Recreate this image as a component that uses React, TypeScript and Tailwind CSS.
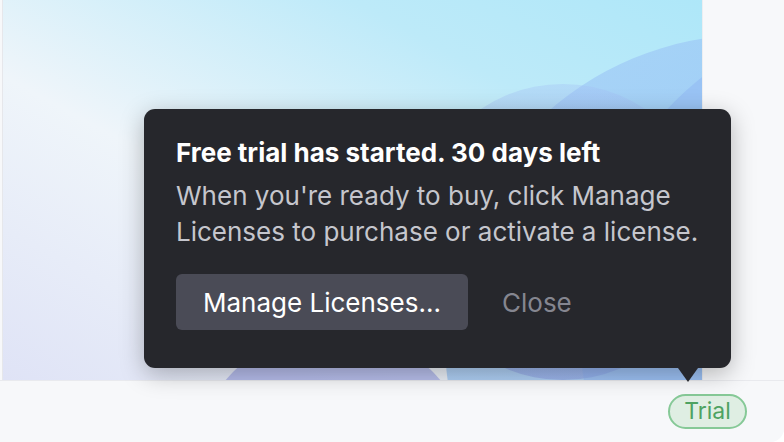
import React from "react"

function Backdrop() {
  return (
    <svg className="absolute inset-0 h-full w-full" viewBox="0 0 699 380" preserveAspectRatio="none">
      <defs>
        <linearGradient id="bg" x1="0" y1="1" x2="1" y2="0">
          <stop offset="0" stopColor="#dfe3f6" />
          <stop offset="0.4" stopColor="#eff5fa" />
          <stop offset="0.75" stopColor="#bdeaf9" />
          <stop offset="1" stopColor="#aee7f9" />
        </linearGradient>
        <linearGradient id="c1" x1="0" y1="0" x2="0.6" y2="1">
          <stop offset="0" stopColor="#a4cdf7" />
          <stop offset="0.6" stopColor="#8fbdf3" />
          <stop offset="1" stopColor="#1cb0e5" />
        </linearGradient>
        <linearGradient id="c2" x1="0" y1="0" x2="0" y2="1">
          <stop offset="0" stopColor="#a3bff4" />
          <stop offset="1" stopColor="#7b86dc" />
        </linearGradient>
      </defs>
      <rect width="699" height="380" fill="url(#bg)" />
      <circle cx="747" cy="340" r="305" fill="url(#c1)" opacity="0.7" />
      <circle cx="560" cy="232" r="148" fill="url(#c2)" opacity="0.35" />
      <circle cx="900" cy="330" r="323" fill="#8aaef2" opacity="0.4" />
      <circle cx="330" cy="470" r="140" fill="#7d86dd" opacity="0.45" />
    </svg>
  )
}

export default function App() {
  return (
    <div
      className="relative flex h-[442px] w-[784px] flex-col overflow-hidden rounded-br-[14px] bg-[#f7f8fa]"
      style={{ fontFamily: "Inter, 'Noto Sans', sans-serif" }}
    >
      <div className="flex h-[380px]">
        <div className="w-[2px] bg-[#f7f8fa]" />
        <div className="w-[1px] bg-[#e6e7eb]" />
        <div className="relative flex-1 overflow-hidden">
          <Backdrop />
        </div>
        <div className="w-[82px] border-l border-[#eceef1] bg-[#f7f8fa]" />
      </div>

      {/* Status bar */}
      <div className="flex flex-1 items-center justify-end border-t border-[#e9eaee] bg-[#f7f8fa] pr-[37px]">
        <div className="flex h-[35px] w-[79px] items-center justify-center rounded-full border-2 border-[#86c997] bg-[#dfeee3] text-[23px] leading-none text-[#4ea262]">
          Trial
        </div>
      </div>

      {/* Popover */}
      <div className="absolute left-[144px] top-[109px] w-[587px] rounded-[11px] bg-[#26272c] px-8 pb-[38px] pt-[29px] shadow-[0_6px_24px_rgba(0,0,0,0.28)]">
        <div className="text-[26px] font-bold leading-[30px] text-white">
          Free trial has started. 30 days left
        </div>
        <p className="mt-[10px] text-[26px] leading-[36px] text-[#c5c6cd]">
          When you're ready to buy, click Manage Licenses to purchase or activate a license.
        </p>
        <div className="mt-[24px] flex items-center gap-[34px]">
          <button className="h-[56px] w-[292px] rounded-[6px] bg-[#4a4b56] text-[26px] text-white">
            Manage Licenses...
          </button>
          <button className="text-[26px] text-[#858690]">Close</button>
        </div>
        <div className="absolute bottom-[-14px] left-[534px] h-0 w-0 border-x-[10px] border-t-[14px] border-x-transparent border-t-[#26272c]" />
      </div>
    </div>
  )
}
